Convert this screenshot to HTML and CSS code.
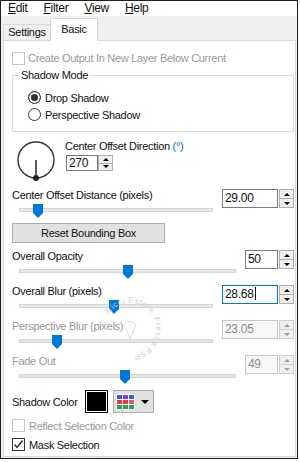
FILE: index.html
```html
<!DOCTYPE html>
<html lang="en">
<head>
  <meta charset="UTF-8">
  <title>Drop Shadow</title>
  <link rel="stylesheet" href="styles.css">
</head>
<body>
  <div class="window">
    <div class="menubar">
      <span class="menu"><u>E</u>dit</span>
      <span class="menu"><u>F</u>ilter</span>
      <span class="menu"><u>V</u>iew</span>
      <span class="menu"><u>H</u>elp</span>
    </div>
    <div class="tabs">
      <div class="tab">Settings</div>
      <div class="tab active">Basic</div>
    </div>
    <div class="panel">
      <label class="check disabled"><span class="box"></span>Create Output In New Layer Below Current</label>

      <fieldset class="group">
        <legend>Shadow Mode</legend>
        <label class="radio"><span class="dot on"></span>Drop Shadow</label>
        <label class="radio"><span class="dot"></span>Perspective Shadow</label>
      </fieldset>

      <div class="direction">
        <svg class="dial" width="46" height="44" viewBox="0 0 46 44">
          <circle cx="24" cy="21" r="18" fill="none" stroke="#333" stroke-width="1.4"/>
          <line x1="24" y1="21" x2="24" y2="38" stroke="#333" stroke-width="1.6"/>
          <circle cx="24" cy="39" r="3" fill="#222"/>
        </svg>
        <div>
          <div class="label">Center Offset Direction <span class="unit">(°)</span></div>
          <div class="spin small">
            <div class="field">270</div>
            <div class="arrows"><span class="up"></span><span class="down"></span></div>
          </div>
        </div>
      </div>

      <div class="param">
        <div class="label">Center Offset Distance (pixels)</div>
        <div class="spin">
          <div class="field">29.00</div>
          <div class="arrows"><span class="up"></span><span class="down"></span></div>
        </div>
        <div class="slider"><div class="track"></div><div class="thumb" style="left:21px"></div></div>
      </div>

      <button class="reset">Reset Bounding Box</button>

      <div class="param short gap">
        <div class="label">Overall Opacity</div>
        <div class="spin">
          <div class="field">50</div>
          <div class="arrows"><span class="up"></span><span class="down"></span></div>
        </div>
        <div class="slider"><div class="track"></div><div class="thumb" style="left:111px"></div></div>
      </div>

      <div class="param">
        <div class="label">Overall Blur (pixels)</div>
        <div class="spin focus">
          <div class="field">28.68<span class="caret"></span></div>
          <div class="arrows"><span class="up"></span><span class="down"></span></div>
        </div>
        <div class="slider"><div class="track"></div><div class="thumb" style="left:97px"></div></div>
      </div>

      <div class="param disabled">
        <div class="label">Perspective Blur (pixels)</div>
        <div class="spin">
          <div class="field">23.05</div>
          <div class="arrows"><span class="up"></span><span class="down"></span></div>
        </div>
        <div class="slider"><div class="track"></div><div class="thumb" style="left:40px"></div></div>
      </div>

      <div class="param short disabled">
        <div class="label">Fade Out</div>
        <div class="spin">
          <div class="field">49</div>
          <div class="arrows"><span class="up"></span><span class="down"></span></div>
        </div>
        <div class="slider"><div class="track"></div><div class="thumb" style="left:108px"></div></div>
      </div>

      <div class="color-row">
        <span class="label">Shadow Color</span>
        <span class="swatch"></span>
        <span class="palette">
          <span class="grid">
            <i class="c-blue"></i><i class="c-purple"></i><i class="c-blue"></i>
            <i class="c-red"></i><i class="c-red"></i><i class="c-pink"></i>
            <i class="c-green"></i><i class="c-green"></i><i class="c-green"></i>
          </span>
          <span class="caret-down"></span>
        </span>
      </div>

      <label class="check row disabled"><span class="box"></span>Reflect Selection Color</label>
      <label class="check row"><span class="box checked">
        <svg width="11" height="11" viewBox="0 0 11 11"><polyline points="1.5,5.5 4,8.5 9.5,1.5" fill="none" stroke="#222" stroke-width="1.3"/></svg>
      </span>Mask Selection</label>

      <!-- faint watermark stamp -->
      <svg class="stamp" width="64" height="64" viewBox="0 0 64 64">
        <defs>
          <path id="arc-top" d="M10.7,17.1 A26,26 0 0 1 53.3,17.1"/>
          <path id="arc-side" d="M55.6,21 A26,26 0 0 1 27.5,57.6"/>
        </defs>
        <g font-size="8" fill="#d0d0d0" font-family="Liberation Sans, sans-serif" letter-spacing="0.6">
          <text><textPath href="#arc-top">Ricci Estela</textPath></text>
          <text><textPath href="#arc-side">Fresca PSP</textPath></text>
        </g>
        <path d="M26,28 q6,-8 12,0 q-4,10 -6,14 q-2,-6 -6,-14z" fill="none" stroke="#dadada" stroke-width="1"/>
      </svg>
    </div>
  </div>
</body>
</html>
```

FILE: styles.css
```css
* {
  box-sizing: border-box;
}
body {
  margin: 0;
  font-family: "Liberation Sans", Arial, sans-serif;
  font-size: 11px;
  letter-spacing: -0.3px;
  color: #111;
  background: #fff;
}
.window {
  width: 298px;
  height: 459px;
  border: 1px solid #1f1f1f;
  background: #f0f0f0;
}

/* menu + tabs */
.menubar {
  display: flex;
  gap: 16px;
  height: 15px;
  padding-left: 7px;
  background: #fff;
  font-size: 12px;
  line-height: 15px;
}
.tabs {
  display: flex;
  align-items: flex-end;
  height: 24px;
  padding-left: 2px;
}
.tab {
  width: 48px;
  height: 16px;
  border: 1px solid #d9d9d9;
  border-bottom: none;
  text-align: center;
  line-height: 14px;
}
.tab.active {
  position: relative;
  z-index: 1;
  height: 23px;
  margin: 0 0 -1px -1px;
  background: #fff;
  line-height: 20px;
}

.panel {
  position: relative;
  height: 417px;
  margin: 0 1px 0 2px;
  padding: 10px 1px 0 8px;
  border: 1px solid #d9d9d9;
  background: #fff;
}
.disabled .label,
.check.disabled,
.disabled {
  color: #999;
}

/* checkboxes and radios */
.check {
  display: flex;
  align-items: center;
  gap: 3px;
  height: 14px;
  line-height: 14px;
}
.check.row {
  height: 19px;
  gap: 4px;
}
.box {
  display: inline-flex;
  align-items: center;
  justify-content: center;
  width: 13px;
  height: 13px;
  border: 1px solid #333;
  background: #fff;
}
.check.disabled .box {
  border-color: #c6c6c6;
}
.group {
  margin: 3px 0 0;
  padding: 7px 0 8px 6px;
  border: 1px solid #dcdcdc;
}
.group legend {
  padding: 0 2px;
  line-height: 14px;
}
.radio {
  display: flex;
  align-items: center;
  gap: 4px;
  height: 17px;
  margin-left: 9px;
}
.dot {
  width: 13px;
  height: 13px;
  border: 1px solid #333;
  border-radius: 50%;
}
.dot.on {
  background: #333;
  box-shadow: inset 0 0 0 2px #fff;
}

/* direction dial */
.direction {
  display: flex;
  gap: 7px;
  height: 44px;
  margin-top: 7px;
}
.direction .label {
  line-height: 14px;
}
.unit {
  color: #0066cc;
}

/* spin boxes */
.spin {
  display: flex;
  gap: 1px;
  height: 19px;
}
.spin.small {
  width: 47px;
  height: 16px;
  margin: 2px 0 0 1px;
  gap: 0;
}
.field {
  flex: 1;
  padding-left: 2px;
  border: 1px solid #7a7a7a;
  background: #fff;
  font-size: 12px;
  line-height: 17px;
}
.small .field {
  line-height: 14px;
}
.spin.focus .field {
  border-color: #0078d7;
}
.caret {
  display: inline-block;
  width: 1px;
  height: 13px;
  margin-left: 1px;
  vertical-align: -2px;
  background: #000;
}
.arrows {
  display: flex;
  flex-direction: column;
  width: 15px;
  border: 1px solid #adadad;
  background: #efefef;
}
.arrows span {
  flex: 1;
  display: flex;
  align-items: center;
  justify-content: center;
}
.arrows .up {
  border-bottom: 1px solid #adadad;
}
.arrows .up::after,
.arrows .down::after {
  content: "";
  border-left: 3px solid transparent;
  border-right: 3px solid transparent;
}
.arrows .up::after {
  border-bottom: 3px solid #000;
}
.arrows .down::after {
  border-top: 3px solid #000;
}
.disabled .field {
  border-color: #c8c8c8;
  background: #f7f7f7;
  color: #8a8a8a;
}
.disabled .arrows {
  border-color: #cfcfcf;
}
.disabled .arrows .up {
  border-bottom-color: #cfcfcf;
}
.disabled .arrows .up::after {
  border-bottom-color: #a0a0a0;
}
.disabled .arrows .down::after {
  border-top-color: #a0a0a0;
}

/* slider groups */
.param {
  display: grid;
  grid-template-columns: 1fr 72px;
  grid-template-rows: 14px 21px;
  column-gap: 2px;
}
.direction + .param {
  margin-top: 5px;
}
.param.short {
  grid-template-columns: 1fr 49px;
}
.param.gap {
  margin-top: 6px;
}
.param .label {
  line-height: 14px;
}
.param .spin {
  grid-column: 2;
  grid-row: 1 / span 2;
  margin-top: 1px;
}
.slider {
  position: relative;
  grid-column: 1;
  grid-row: 2;
}
.track {
  height: 4px;
  margin: 6px 7px 0;
  border: 1px solid #d6d6d6;
  background: #e7e7e7;
}
.thumb {
  position: absolute;
  top: 2px;
  width: 10px;
  height: 14px;
  background: #0078d7;
  clip-path: polygon(0 0, 100% 0, 100% 64%, 50% 100%, 0 64%);
}

.reset {
  display: block;
  width: 153px;
  height: 20px;
  padding: 0;
  border: 1px solid #adadad;
  background: #e1e1e1;
  font: inherit;
  letter-spacing: inherit;
  color: #111;
}

/* color picker row */
.color-row {
  display: flex;
  align-items: center;
  height: 23px;
  margin: 1px 0 3px;
}
.color-row .label {
  width: 73px;
}
.swatch {
  width: 23px;
  height: 23px;
  background: #000;
  box-shadow: inset 0 0 0 1px #000, inset 0 0 0 2px #fff;
}
.palette {
  display: flex;
  align-items: center;
  width: 41px;
  height: 23px;
  margin-left: 5px;
  padding-left: 2px;
  border: 1px solid #adadad;
  background: #e1e1e1;
}
.grid {
  display: grid;
  grid-template-columns: repeat(3, 5px);
  grid-template-rows: repeat(3, 4px);
  gap: 1px;
  padding: 1px;
  background: #fff;
}
.grid i {
  display: block;
}
.c-blue { background: #2f5ce0; }
.c-purple { background: #7a45d6; }
.c-red { background: #e8373e; }
.c-pink { background: #f2506a; }
.c-green { background: #23a54b; }
.caret-down {
  margin-left: 6px;
  border-left: 4px solid transparent;
  border-right: 4px solid transparent;
  border-top: 4px solid #000;
}

.stamp {
  position: absolute;
  left: 94px;
  top: 256px;
  pointer-events: none;
}
```
